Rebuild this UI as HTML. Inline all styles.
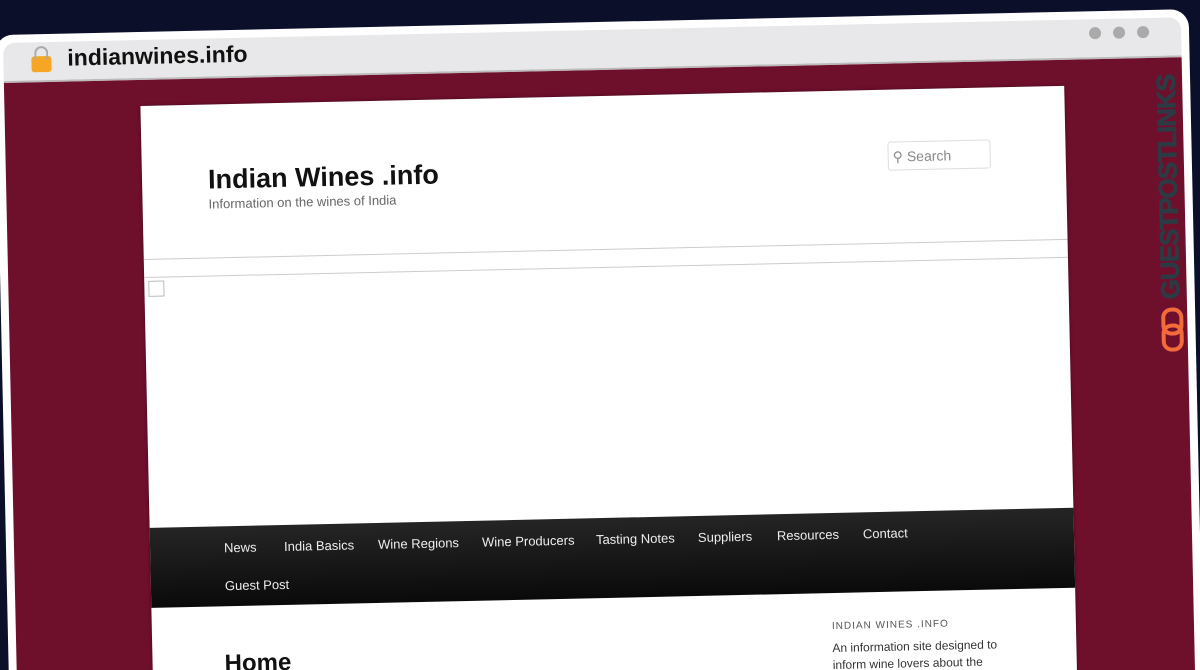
<!DOCTYPE html><html><head><style>
html,body{margin:0;width:1200px;height:670px;overflow:hidden}
body{background:#0b0f2a;font-family:"Liberation Sans",sans-serif;position:relative}
.w{position:absolute;left:2px;top:22px;width:1194px;height:670px;background:#fff;border-radius:18px;transform:rotate(-1.25deg);transform-origin:600px 335px}
.bar{position:absolute;left:8px;top:8px;right:8px;height:38px;background:#e8e8ea;border-radius:12px 12px 0 0;border-bottom:2px solid #bbb}
.url{position:absolute;left:64px;top:3px;font-size:23px;font-weight:bold;color:#111}
.lock{position:absolute;left:28px;top:14px;width:20px;height:16px;background:#f6a623;border-radius:3px}
.lock:before{content:"";position:absolute;left:3px;top:-10px;width:10px;height:12px;border:2px solid #aaa;border-bottom:none;border-radius:7px 7px 0 0}
.dot{position:absolute;top:8px;width:12px;height:12px;border-radius:50%;background:#aaa}
.m{position:absolute;left:8px;top:48px;right:8px;bottom:0;background:#6e0f2c;overflow:hidden}
.p{position:absolute;left:136px;top:26px;width:924px;height:640px;background:#fff;box-shadow:0 0 3px rgba(0,0,0,.4)}
.t{position:absolute;left:66px;top:60px;font-size:27px;font-weight:bold;color:#111}
.d{position:absolute;left:66px;top:92px;font-size:13px;color:#666}
.s{position:absolute;left:746px;top:52px;width:103px;height:29px;border:1px solid #ddd;border-radius:3px;font-size:14px;color:#888;line-height:28px;padding-left:4px;box-sizing:border-box}
.l1{position:absolute;left:0;right:0;top:153px;border-top:1px solid #ccc}
.l2{position:absolute;left:0;right:0;top:171px;border-top:1px solid #ccc}
.img{position:absolute;left:4px;top:175px;width:14px;height:14px;border:1px solid #bbb}
.nav{position:absolute;left:0;right:0;top:422px;height:80px;background:linear-gradient(#252525,#0a0a0a)}
.nav span{position:absolute;color:#eee;font-size:13px}
.h{position:absolute;left:72px;top:546px;font-size:24px;font-weight:bold;color:#111}
.sb{position:absolute;left:680px;top:530px;font-size:10px;letter-spacing:1px;color:#555}
.sb2{position:absolute;left:680px;top:549px;font-size:12px;line-height:17px;color:#333;width:175px}
</style></head><body>
<div class="w">
<div class="bar"><div class="lock"></div><div class="url">indianwines.info</div>
<div class="dot" style="right:80px"></div><div class="dot" style="right:56px"></div><div class="dot" style="right:32px"></div></div>
<div class="m">
<div class="p">
<div class="t">Indian Wines .info</div>
<div class="d">Information on the wines of India</div>
<div class="s">⚲ Search</div>
<div class="l1"></div><div class="l2"></div><div class="img"></div>
<div class="nav">
<span style="left:74px;top:14px">News</span><span style="left:134px;top:14px">India Basics</span><span style="left:228px;top:14px">Wine Regions</span><span style="left:332px;top:14px">Wine Producers</span><span style="left:446px;top:14px">Tasting Notes</span><span style="left:548px;top:14px">Suppliers</span><span style="left:627px;top:14px">Resources</span><span style="left:713px;top:14px">Contact</span>
<span style="left:74px;top:52px">Guest Post</span></div>
<div class="h">Home</div>
<div class="sb">INDIAN WINES .INFO</div>
<div class="sb2">An information site designed to inform wine lovers about the</div>
</div>
<div style="position:absolute;left:1142px;top:-6px;width:40px;height:260px"><div style="position:absolute;left:-110px;top:120px;width:260px;transform:rotate(-90deg);font-weight:900;font-size:26px;color:#2d3a44;text-align:center;white-space:nowrap;letter-spacing:-1px;-webkit-text-stroke:0.8px #2d3a44">GUESTPOSTLINKS</div>
<div style="position:absolute;left:10px;top:256px;width:14px;height:20px;border:4px solid #f26b3a;border-radius:10px"></div><div style="position:absolute;left:10px;top:272px;width:14px;height:20px;border:4px solid #f26b3a;border-radius:10px"></div></div>
</div></div>
</body></html>
